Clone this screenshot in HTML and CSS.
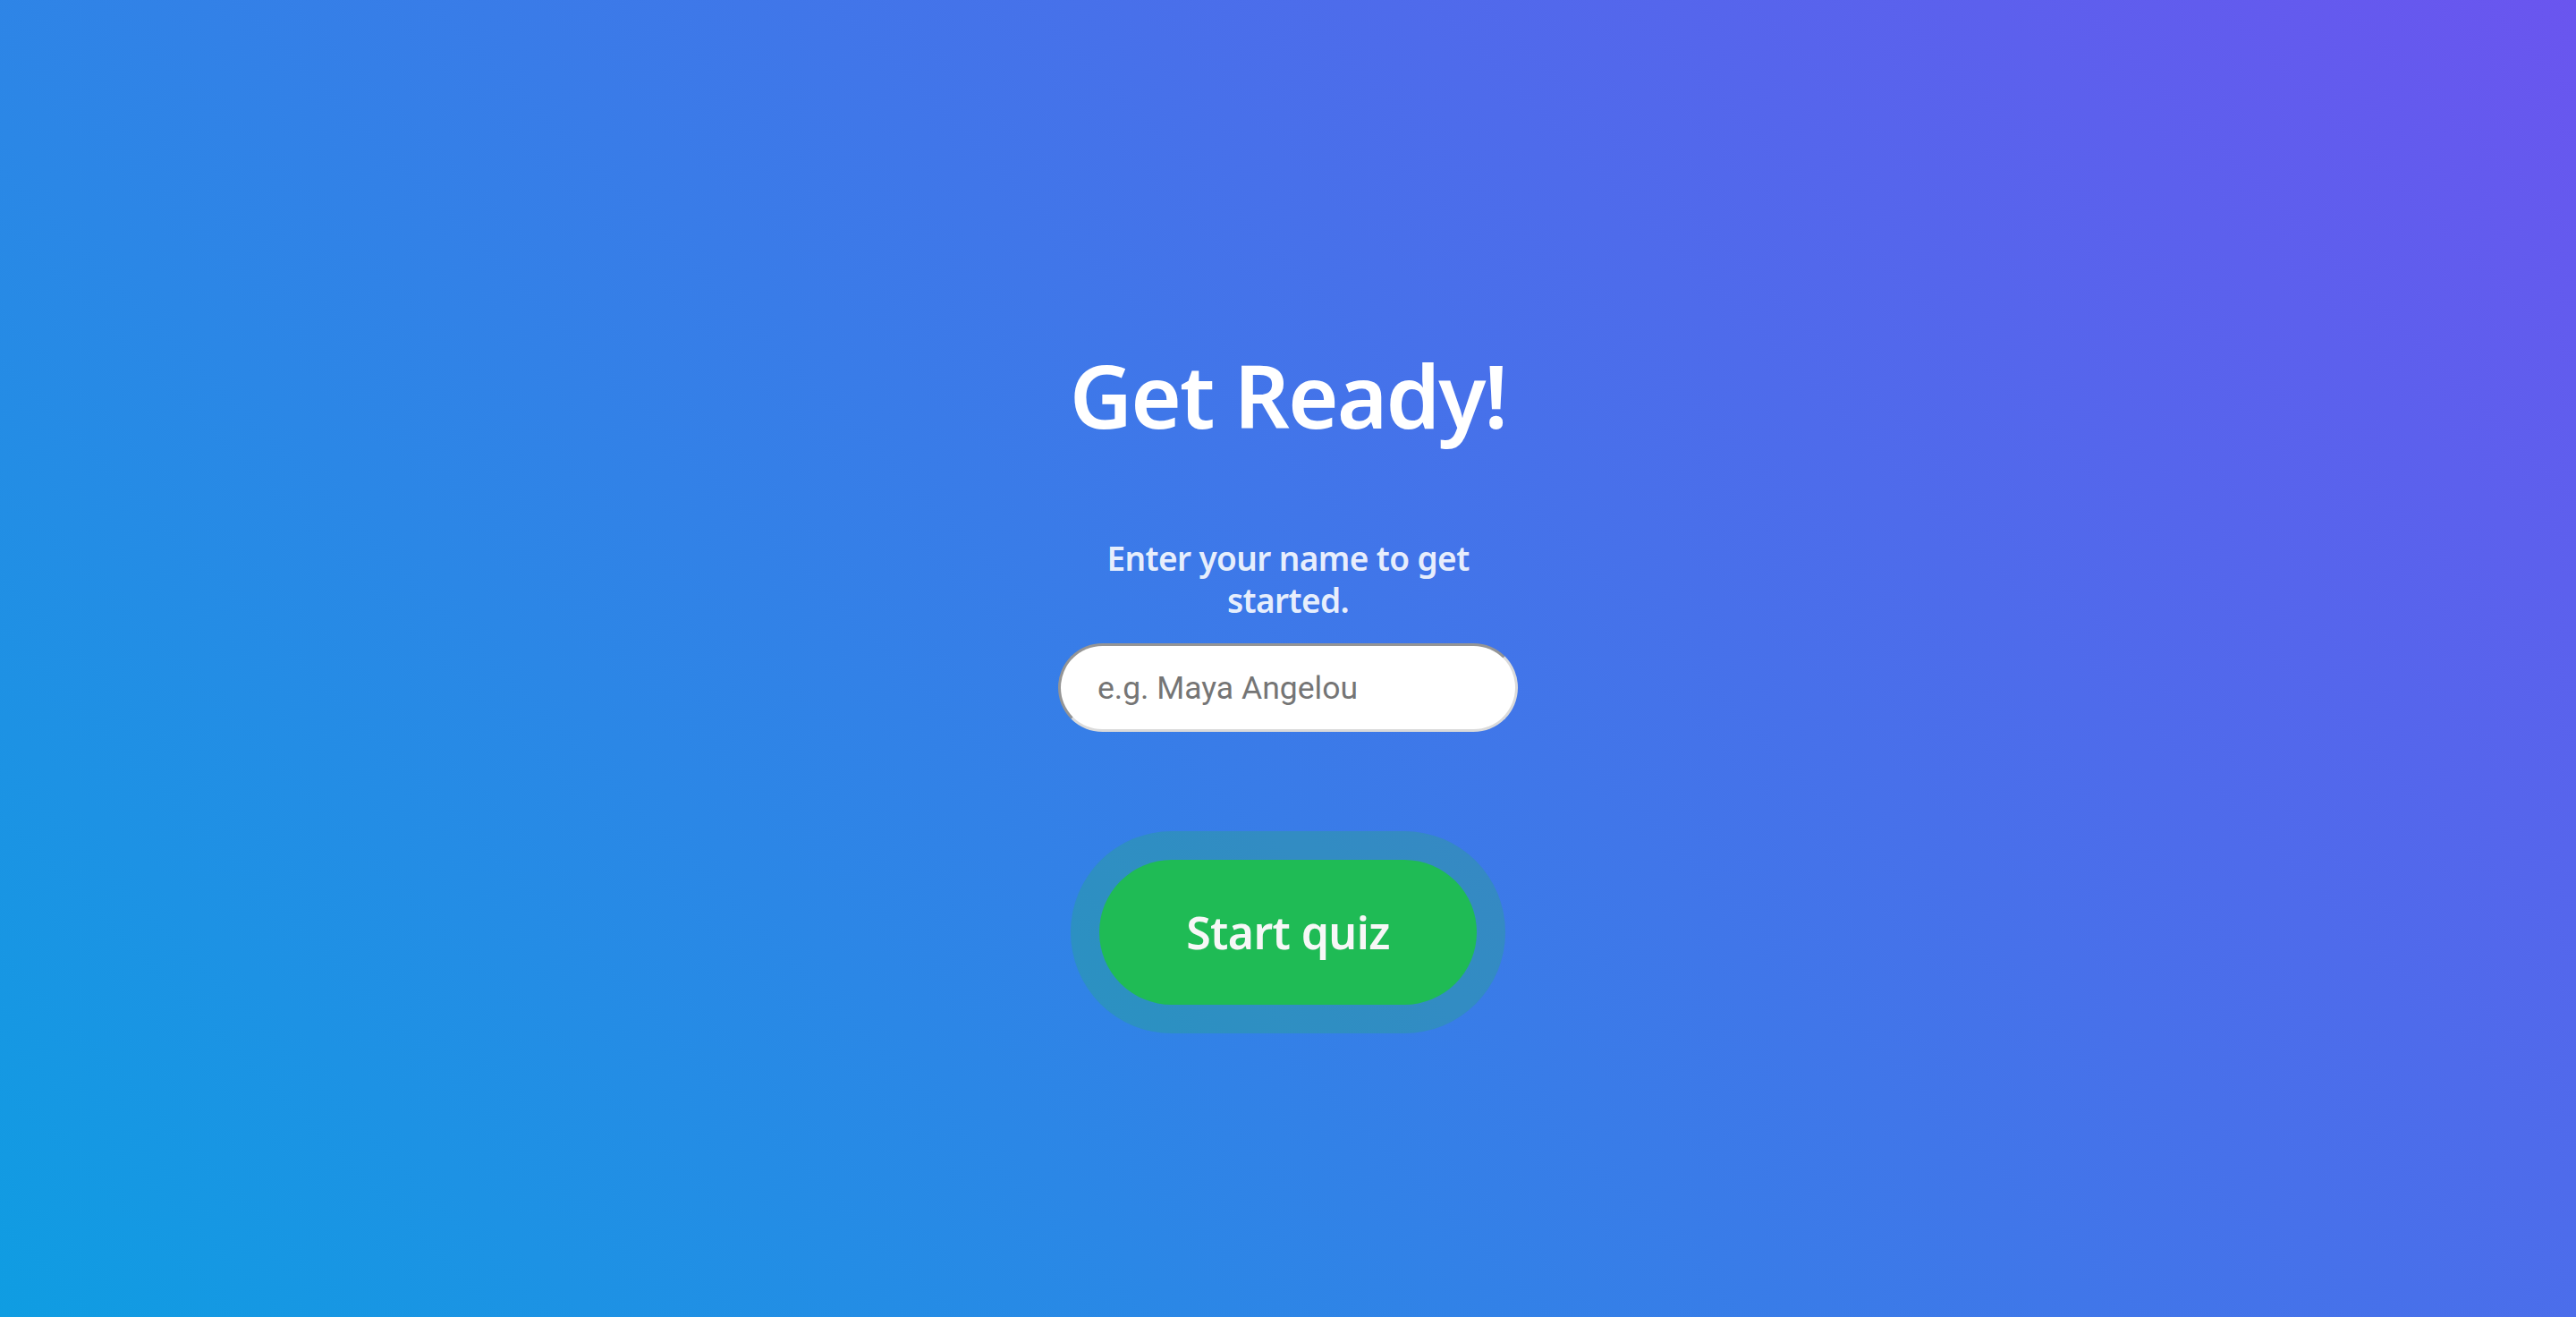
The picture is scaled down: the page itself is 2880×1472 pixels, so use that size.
FILE: index.html
```html
<!DOCTYPE html>
<html lang="en">
<head>
<meta charset="utf-8">
<title>Get Ready!</title>
<link rel="stylesheet" href="styles.css">
</head>
<body>
<main class="screen">
  <h1 class="title">Get Ready!</h1>
  <p class="subtitle">Enter your name to get started.</p>
  <input class="name-input" type="text" placeholder="e.g. Maya Angelou">
  <button class="start-btn" type="button">Start quiz</button>
</main>
</body>
</html>
```
FILE: styles.css
```css
html, body {
  margin: 0;
  padding: 0;
  height: 100%;
}

body {
  background: linear-gradient(45deg, #0f9de2 0%, #6a55ef 100%);
  font-family: "Noto Sans", "Open Sans", sans-serif;
  color: #ffffff;
}

.screen {
  box-sizing: border-box;
  min-height: 100vh;
  display: flex;
  flex-direction: column;
  align-items: center;
  padding-top: 382px;
}

.title {
  margin: 0;
  font-size: 97px;
  line-height: 118px;
  font-weight: 600;
  letter-spacing: -2px;
  color: #ffffff;
}

.subtitle {
  margin: 100px 0 0;
  max-width: 470px;
  text-align: center;
  font-size: 37px;
  line-height: 47px;
  font-weight: 600;
  letter-spacing: -0.6px;
  color: rgba(255, 255, 255, 0.9);
}

.name-input {
  box-sizing: border-box;
  margin-top: 25px;
  width: 514px;
  height: 99px;
  padding: 0 20px 0 41px;
  border-width: 3px;
  border-style: solid;
  border-color: #959595 #dadada #dadada #959595;
  border-radius: 9999px;
  background: #ffffff;
  font-family: Roboto, "Noto Sans", sans-serif;
  font-size: 35.5px;
  color: #333333;
  outline: none;
}

.name-input::placeholder {
  color: #757575;
  opacity: 1;
}

.start-btn {
  box-sizing: border-box;
  margin-top: 143px;
  width: 422px;
  height: 162px;
  padding: 0;
  border: none;
  border-radius: 9999px;
  background: #1fbb55;
  box-shadow: 0 0 0 32px rgba(31, 187, 85, 0.25);
  font-family: "Noto Sans", "Open Sans", sans-serif;
  font-size: 50px;
  font-weight: 600;
  letter-spacing: -0.6px;
  color: #f7f7f7;
  cursor: pointer;
}
```
